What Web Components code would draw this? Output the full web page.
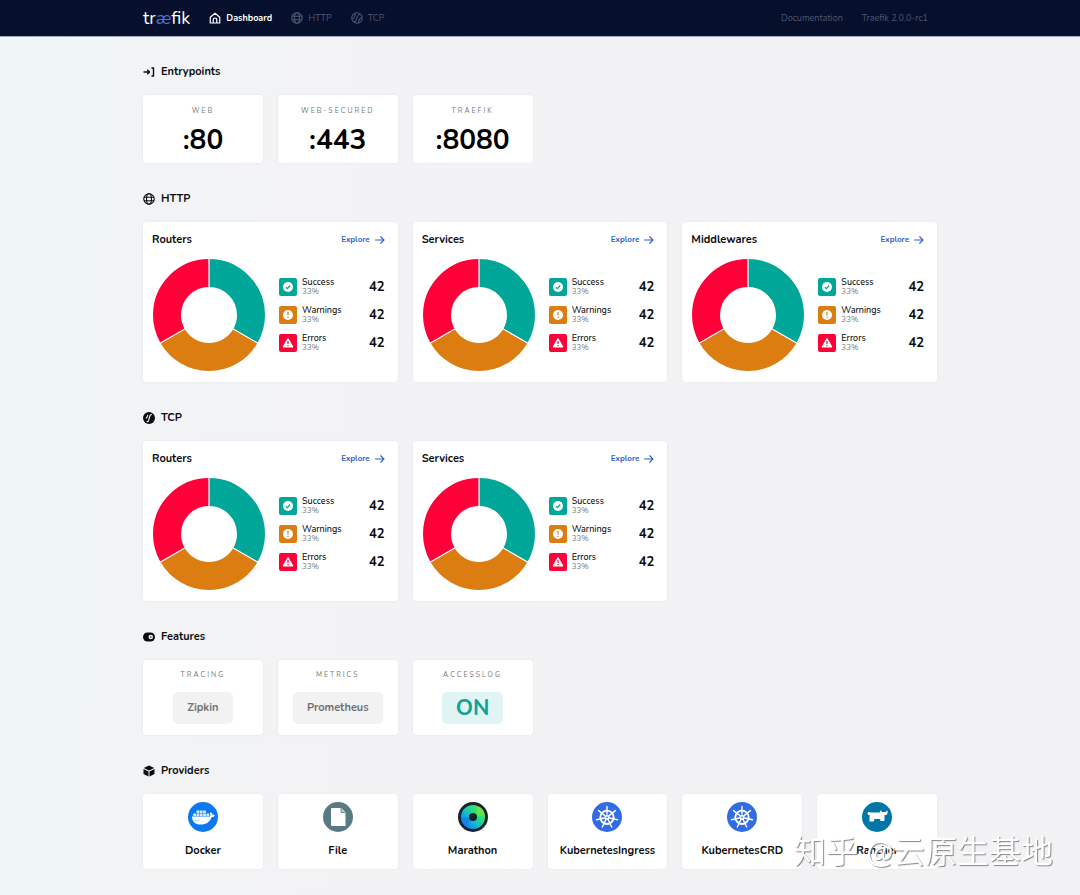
<!DOCTYPE html>
<html lang="en">
<head>
<meta charset="utf-8">
<meta name="viewport" content="width=device-width, initial-scale=1">
<title>Traefik</title>
<style>
  body {
    margin: 0;
    min-height: 100vh;
    font-family: Nunito, Lato, "Liberation Sans", sans-serif;
    color: #0c0d10;
    background: linear-gradient(92deg, #eff6f7 0%, #f0f5f6 9%, #f2f3f5 20%, #f2f2f5 100%);
  }
</style>
</head>
<body>
<tk-app></tk-app>

<script>
const ICONS = {
  home: ['0 0 24 24', `<path d="M2.500 10.500 12 2.500l9.500 8V22h-19z M8.500 22v-6.500a3.500 3.500 0 0 1 7 0V22" fill="none" stroke="currentColor" stroke-width="2.4" stroke-linejoin="round"/>`],
  globe: ['0 0 24 24', `<g fill="none" stroke="currentColor" stroke-width="2.2"><circle cx="12" cy="12" r="10.5"/><ellipse cx="12" cy="12" rx="5" ry="10.5"/><path d="M2 8.5h20M2 15.5h20"/></g>`],
  tcp: ['0 0 24 24', `<g fill="none" stroke="currentColor" stroke-width="2.2" stroke-linecap="round"><circle cx="12" cy="12" r="10.5"/><path d="M6.500 19c6 0 3-5.500 5.500-8s1-6 5-6M3 13c5 0 3-4 6-9M15 20c1-4 1-8 6-8"/></g>`],
  tcpSolid: ['0 0 24 24', `<circle cx="12" cy="12" r="12" fill="currentColor"/><path d="M8 19.500c5-.5 3-5 4.500-7.500S12.500 6 17 5M6.500 12c2-1 2-3 3-5" fill="none" stroke="#f2f3f5" stroke-width="2.400" stroke-linecap="round"/>`],
  entry: ['0 0 24 24', `<path d="M1 12h12M8.500 7.500 13 12l-4.500 4.500M17 4h4v16h-4" fill="none" stroke="currentColor" stroke-width="2.800"/>`],
  toggle: ['0 0 24 24', `<rect y="3" width="24" height="18" rx="9" fill="currentColor"/><circle cx="15.500" cy="12" r="4.500" fill="#f2f3f5"/><circle cx="15.500" cy="12" r="2" fill="#777"/>`],
  cube: ['0 0 24 24', `<path d="M12 1 22.500 6 12 11 1.500 6zM1 8l10 5v10L1 18zM23 8l-10 5v10l10-5z" fill="currentColor"/>`],
  arrow: ['0 0 20 16', `<path d="M1 8h17M11.500 1.500 18 8l-6.500 6.500" fill="none" stroke="currentColor" stroke-width="2.200" stroke-linecap="round"/>`],
  success: ['0 0 18 18', `<circle cx="9" cy="9" r="5" fill="#fff"/><path d="m6.800 9.200 1.600 1.500 2.800-3.200" fill="none" stroke="#00a697" stroke-width="1.200"/>`],
  warning: ['0 0 18 18', `<circle cx="9" cy="9" r="5" fill="#fff"/><path d="M9 6v3.600M9 10.800v1.200" stroke="#db7d11" stroke-width="1.200"/>`],
  error: ['0 0 18 18', `<path d="M9 4.500 14 13H4z" fill="#fff" stroke="#fff" stroke-linejoin="round"/><path d="M9 7v3M9 11v1.300" stroke="#ff0039" stroke-width="1.200"/>`],
  docker: ['0 0 30 30', `<circle cx="15" cy="15" r="15" fill="#0b7af0"/><path d="M4 14.500h18c.6-1 .4-2.700-.2-3.500l1.200-.8c.8.700 1.300 1.500 1.400 2.500.8-.2 1.800-.1 2.600.5-.7 1.400-2 1.800-3.300 1.800C22 20 18 22.500 13 22.500c-6 0-8.700-2.500-9-8z" fill="#fff"/><path d="M5.200 11.500H8V14H5.200zM8.500 11.500h2.800V14H8.500zM11.800 11.500h2.800V14h-2.800zM15.100 11.500h2.800V14h-2.800zM18.400 11.500h2.800V14h-2.800zM8.500 8.500h2.800V11H8.500zM11.800 8.500h2.800V11h-2.800zM15.100 8.500h2.800V11h-2.800z" fill="#d6eaff"/><path d="M6 18.500c3 .6 5-.2 6-1" stroke="#9bcaff" fill="none" stroke-width=".7"/>`],
  file: ['0 0 30 30', `<circle cx="15" cy="15" r="15" fill="#5a7a82"/><path d="M9 6h9l4.500 4.500V24H9a1 1 0 0 1-1-1V7a1 1 0 0 1 1-1z" fill="#fff"/><path d="M18 6v4.500h4.500" fill="#c6d1d4" stroke="#5a7a82" stroke-width=".8"/>`],
  marathon: ['0 0 30 30', `
    <defs>
      <linearGradient id="ring" x1="0.900" y1="0.200" x2="0.200" y2="0.850">
        <stop offset="0" stop-color="#5fe04a"/><stop offset=".35" stop-color="#1fdc8c"/>
        <stop offset=".65" stop-color="#12bcd0"/><stop offset="1" stop-color="#1483f0"/>
      </linearGradient>
    </defs>
    <circle cx="15" cy="15" r="15" fill="#16222c"/><circle cx="15" cy="15" r="12" fill="url(#ring)"/>
    <path d="M15 15 8 24.700A12 12 0 0 1 3 15z" fill="#1478f0" opacity=".6"/><path d="M15 15 21 4.600A12 12 0 0 1 27 13z" fill="#7be63c" opacity=".6"/>
    <circle cx="15" cy="15" r="4" fill="#16222c"/>`],
  kubernetes: ['0 0 30 30', `<circle cx="15" cy="15" r="15" fill="#326ce5"/><g fill="none" stroke="#fff" stroke-linecap="round"><circle cx="15" cy="15.300" r="6.700" stroke-width="1.900"/><path stroke-width="1.400" d="M15 12V4.500M17.100 13.600 23.400 8.600M17.600 16 25.500 17.700M16.200 17.700 19.700 25M13.800 17.700 10.300 25M12.400 16 4.500 17.700M12.900 13.600 6.600 8.600"/></g><circle cx="15" cy="15.300" r="2.600" fill="#fff"/><circle cx="15" cy="15.300" r=".9" fill="#326ce5"/>`],
  rancher: ['0 0 30 30', `<circle cx="15" cy="15" r="15" fill="#0075a8"/><path d="M5.500 11.500c0-1.400 1-1.800 2-1.500L8 10.500h10c.2-1-.2-2 1-2 .8 0 .6 1 1 1.500h3.500c1 0 1-1.500 1.600-1.500.7 0 .6 2 .2 3.200-.4 1-1 1.300-2 1.300-.5 0-.8.5-.8 1.200V18c0 .6-.4 1-1 1h-2.300c-.6 0-1-.4-1-1v-1h-6v1.500c0 .6-.4 1-1 1H8.500c-.6 0-1-.4-1-1V12.500c-.3 1-2 .5-2-1z" fill="#fff"/>`]
};

function define(name, render) {
  customElements.define(name, class extends HTMLElement {
    constructor() {
      super();
      this.attachShadow({mode: 'open'});
    }

    connectedCallback() {
      this.shadowRoot.innerHTML = render(this);
    }
  });
}

define('tk-icon', el => {
  const [box, shapes] = ICONS[el.getAttribute('name')];
  return `
    <style>
      :host { display: block; flex: none; width: 12px; height: 12px; }
      svg { display: block; width: 100%; height: 100%; }
    </style>
    <svg viewBox="${box}" aria-hidden="true">${shapes}</svg>`;
});

define('tk-header', () => `
  <style>
    :host { display: block; background: #060f2b; color: #fff; border-bottom: 1px solid #a4abbc; }
    .bar {
      display: flex;
      align-items: center;
      max-width: 794px;
      height: 36px;
      margin: 0 auto;
    }
    nav { display: flex; gap: 19px; }
    nav.meta { margin-left: auto; margin-right: 9px; }
    a {
      display: flex;
      align-items: center;
      gap: 5px;
      color: #505772;
      font-size: 9px;
      line-height: 12px;
      text-decoration: none;
    }
    a.active { color: #fff; font-weight: 700; }
    a.logo { display: block; margin-right: 19px; color: #fff; font-size: 18px; line-height: 24px; }
    .logo i { color: #5075d8; }
  </style>
  <header class="bar">
    <a class="logo" href="#">tr<i>æ</i>fik</a>
    <nav>
      <a class="active" href="#dashboard"><tk-icon name="home"></tk-icon>Dashboard</a>
      <a href="#http"><tk-icon name="globe"></tk-icon>HTTP</a>
      <a href="#tcp"><tk-icon name="tcp"></tk-icon>TCP</a>
    </nav>
    <nav class="meta">
      <a href="#docs">Documentation</a>
      <a href="#version">Traefik 2.0.0-rc1</a>
    </nav>
  </header>`);

define('tk-section', el => `
  <style>
    :host { display: block; }
    h2 {
      display: flex;
      align-items: center;
      gap: 6px;
      margin: 0 0 15px;
      font-size: 11px;
      line-height: 16px;
    }
    .grid { display: grid; grid-template-columns: repeat(6, 1fr); gap: 15px; }
  </style>
  <section>
    <h2><tk-icon name="${el.getAttribute('icon')}"></tk-icon>${el.getAttribute('heading')}</h2>
    <div class="grid"><slot></slot></div>
  </section>`);

const CARD = `
  background: #fff;
  border-radius: 4px;
  box-shadow: 0 0 3px rgba(20, 30, 60, .06);
  box-sizing: border-box;
`;

const LABEL = `
  color: #777;
  font-size: 7px;
  line-height: 12px;
  letter-spacing: 2px;
  text-transform: uppercase;
`;

define('tk-port', el => `
  <style>
    :host { ${CARD} display: flex; flex-direction: column; align-items: center; gap: 7px; padding: 10px 4px 7px; }
    .label { ${LABEL} }
    .value { font-size: 28px; line-height: 32px; font-weight: 700; color: #000; }
  </style>
  <div class="label">${el.getAttribute('label')}</div>
  <div class="value"><slot></slot></div>`);

define('tk-feature', el => `
  <style>
    :host { ${CARD} display: flex; flex-direction: column; align-items: center; gap: 11px; padding: 9px 4px 11px; }
    .label { ${LABEL} }
    .value {
      padding: 0 14px;
      border-radius: 5px;
      background: #f2f2f3;
      color: #717171;
      font-size: 11px;
      line-height: 32px;
      font-weight: 700;
    }
    :host([on]) .value { background: #e0f5f3; color: #12a193; font-size: 22px; }
  </style>
  <div class="label">${el.getAttribute('label')}</div>
  <div class="value"><slot></slot></div>`);

define('tk-provider', el => `
  <style>
    :host {
      ${CARD}
      display: flex;
      flex-direction: column;
      align-items: center;
      gap: 11px;
      padding: 8px 4px 10px;
      font-size: 11px;
      line-height: 16px;
      font-weight: 700;
    }
    tk-icon { width: 30px; height: 30px; }
  </style>
  <tk-icon name="${el.getAttribute('icon')}"></tk-icon>
  <slot></slot>`);

define('tk-stat', el => `
  <style>
    :host { display: flex; align-items: center; gap: 5px; }
    tk-icon { width: 18px; height: 18px; border-radius: 2px; }
    [name=success] { background: #00a697; }
    [name=warning] { background: #db7d11; }
    [name=error] { background: #ff0039; }
    .name { flex: 1; font-size: 9px; line-height: 10px; font-weight: 500; }
    small { display: block; font-size: 8px; line-height: 10px; color: #8b8b8b; }
    b { font-size: 13px; line-height: 16px; }
  </style>
  <tk-icon name="${el.getAttribute('type')}"></tk-icon>
  <div class="name"><slot></slot><small>33%</small></div>
  <b>42</b>`);

define('tk-chart', el => `
  <style>
    :host { ${CARD} display: block; grid-column: span 2; padding: 10px 13px 10px 9px; }
    header { display: flex; align-items: center; justify-content: space-between; margin-bottom: 10px; }
    h3 { margin: 0; font-size: 11px; line-height: 16px; }
    a {
      display: flex;
      align-items: center;
      gap: 5px;
      color: #2f5fd0;
      font-size: 8px;
      line-height: 12px;
      font-weight: 700;
      text-decoration: none;
    }
    a tk-icon { width: 10px; height: 8px; }
    .body { display: flex; align-items: center; gap: 13px; }
    .donut { flex: none; width: 114px; height: 114px; }
    .legend { flex: 1; display: grid; gap: 8px; }
  </style>
  <header>
    <h3>${el.getAttribute('heading')}</h3>
    <a href="#explore">Explore<tk-icon name="arrow"></tk-icon></a>
  </header>
  <div class="body">
    <svg class="donut" viewBox="-57 -57 114 114" aria-hidden="true">
      <g fill="none" stroke-width="28" transform="rotate(-90)">
        <circle r="42" stroke="#00a697" pathLength="3" stroke-dasharray="1 2"/>
        <circle r="42" stroke="#db7d11" pathLength="3" stroke-dasharray="1 2" stroke-dashoffset="-1"/>
        <circle r="42" stroke="#ff0039" pathLength="3" stroke-dasharray="1 2" stroke-dashoffset="-2"/>
      </g>
      <path d="M0-27V-57M23.400 13.500 49.400 28.500M-23.400 13.500-49.400 28.500" stroke="#fff" stroke-width="1.200"/>
    </svg>
    <div class="legend">
      <tk-stat type="success">Success</tk-stat>
      <tk-stat type="warning">Warnings</tk-stat>
      <tk-stat type="error">Errors</tk-stat>
    </div>
  </div>`);

define('tk-watermark', () => `
  <style>
    :host {
      position: fixed;
      right: 27px;
      bottom: 24px;
      font: 32px/40px Lato, "Noto Sans CJK SC", sans-serif;
      color: #fff;
      text-shadow: 1px 1px 1px #888;
      white-space: nowrap;
      pointer-events: none;
    }
  </style>
  <slot></slot>`);

define('tk-app', () => `
  <style>
    :host { display: block; }
    main {
      display: flex;
      flex-direction: column;
      gap: 28px;
      max-width: 794px;
      margin: 0 auto;
      padding: 27px 0 26px;
    }
  </style>
  <tk-header></tk-header>
  <main>
    <tk-section icon="entry" heading="Entrypoints">
      <tk-port label="web">:80</tk-port>
      <tk-port label="web-secured">:443</tk-port>
      <tk-port label="traefik">:8080</tk-port>
    </tk-section>
    <tk-section icon="globe" heading="HTTP">
      <tk-chart heading="Routers"></tk-chart>
      <tk-chart heading="Services"></tk-chart>
      <tk-chart heading="Middlewares"></tk-chart>
    </tk-section>
    <tk-section icon="tcpSolid" heading="TCP">
      <tk-chart heading="Routers"></tk-chart>
      <tk-chart heading="Services"></tk-chart>
    </tk-section>
    <tk-section icon="toggle" heading="Features">
      <tk-feature label="tracing">Zipkin</tk-feature>
      <tk-feature label="metrics">Prometheus</tk-feature>
      <tk-feature label="accesslog" on>ON</tk-feature>
    </tk-section>
    <tk-section icon="cube" heading="Providers">
      <tk-provider icon="docker">Docker</tk-provider>
      <tk-provider icon="file">File</tk-provider>
      <tk-provider icon="marathon">Marathon</tk-provider>
      <tk-provider icon="kubernetes">KubernetesIngress</tk-provider>
      <tk-provider icon="kubernetes">KubernetesCRD</tk-provider>
      <tk-provider icon="rancher">Rancher</tk-provider>
    </tk-section>
  </main>
  <tk-watermark lang="zh-CN">知乎 @云原生基地</tk-watermark>`);
</script>
</body>
</html>
